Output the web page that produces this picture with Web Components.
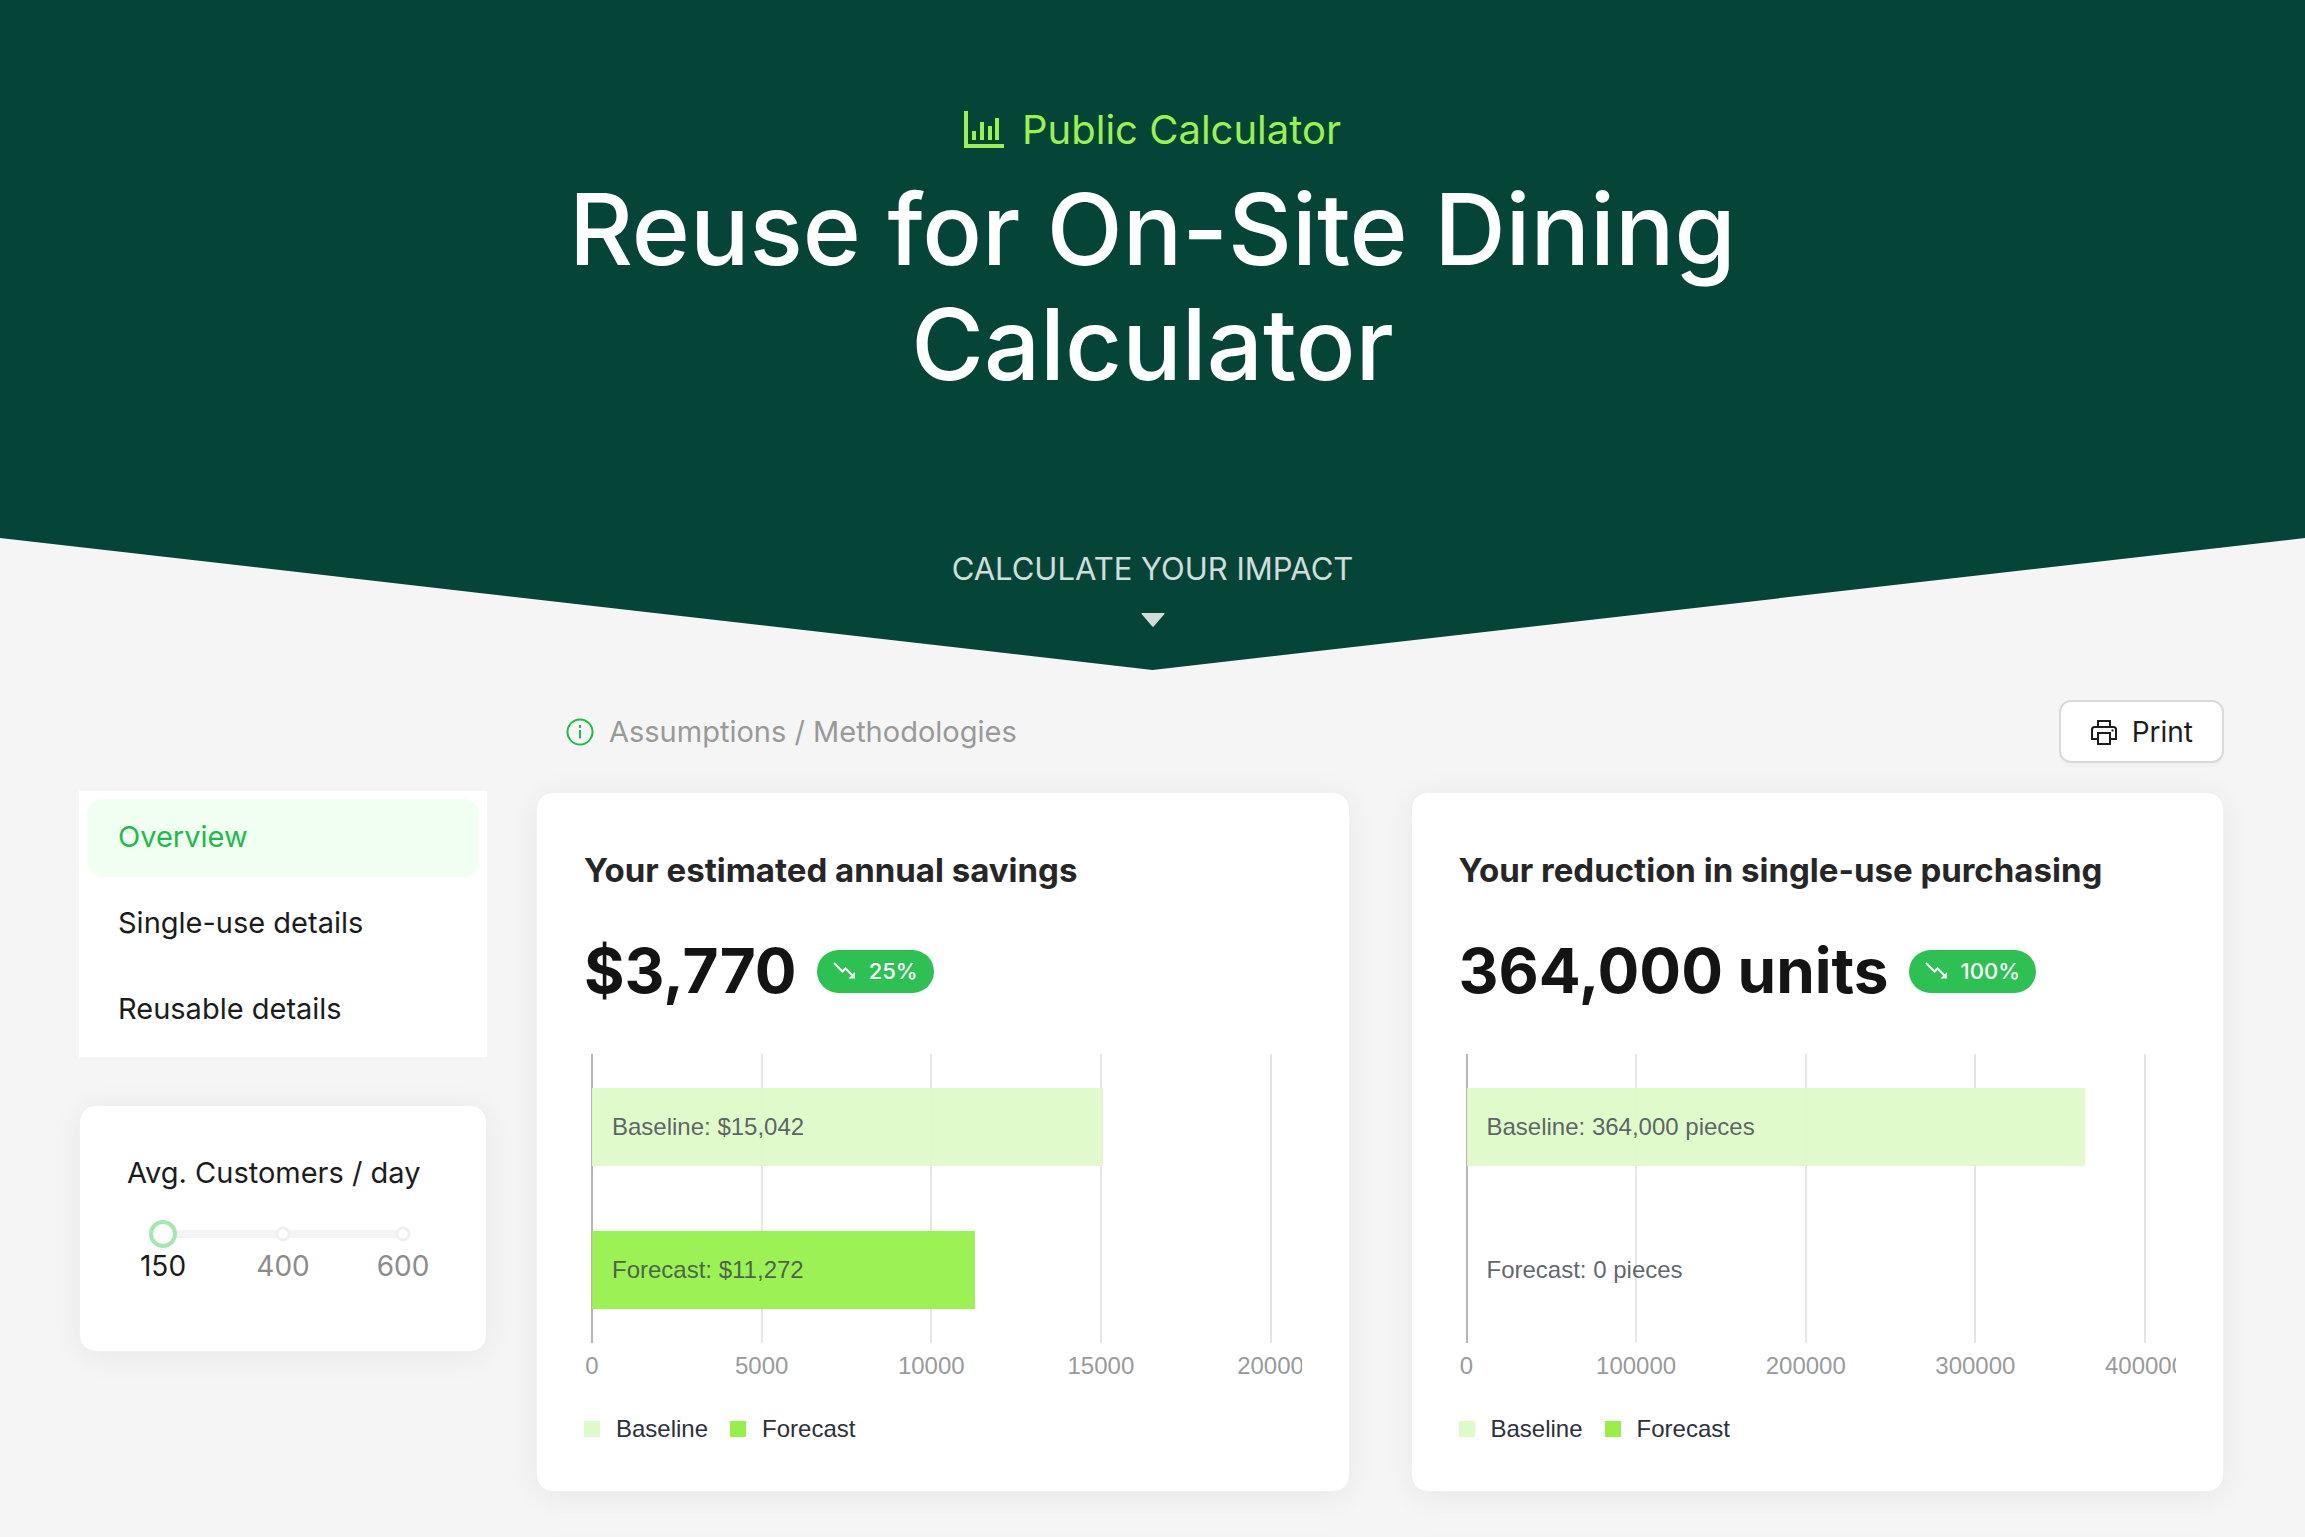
<!DOCTYPE html>
<html lang="en">
<head>
<meta charset="utf-8">
<title>Reuse for On-Site Dining Calculator</title>
<style>
    body{
        margin: 0;
        height: 100vh;
        overflow: hidden;
        background: #f5f5f5;
        color: #1c1c1c;
        font-family: Inter, "Open Sans", sans-serif;
        font-size: 29px;
    }
    .Page-body{
        display: grid;
        grid-template-columns: 408px minmax(0, 1fr);
        column-gap: 49px;
        padding: 30px 81px 0 79px;
    }
    .Page-side{
        display: flex;
        flex-direction: column;
        gap: 48px;
        padding-top: 91px;
    }
    .Page-cards{
        display: grid;
        grid-template-columns: 1fr 1fr;
        gap: 61px;
        margin-top: 29px;
    }
</style>
</head>
<body>
    <comp-hero eyebrow="Public Calculator" prompt="Calculate your impact">Reuse for On-Site Dining Calculator</comp-hero>

    <div class="Page-body">
        <div class="Page-side">
            <comp-menu>
                <comp-menu-item href="#overview" active>Overview</comp-menu-item>
                <comp-menu-item href="#single-use">Single-use details</comp-menu-item>
                <comp-menu-item href="#reusable">Reusable details</comp-menu-item>
            </comp-menu>
            <comp-card>
                <comp-slider label="Avg. Customers / day" steps="150,400,600"></comp-slider>
            </comp-card>
        </div>
        <main>
            <comp-toolbar></comp-toolbar>
            <div class="Page-cards">
                <comp-card>
                    <comp-stat heading="Your estimated annual savings" value="$3,770" change="25%"></comp-stat>
                    <comp-chart max="20000" baseline="15042" forecast="11272" prefix="$"></comp-chart>
                </comp-card>
                <comp-card>
                    <comp-stat heading="Your reduction in single-use purchasing" value="364,000 units" change="100%"></comp-stat>
                    <comp-chart max="400000" baseline="364000" forecast="0" suffix=" pieces"></comp-chart>
                </comp-card>
                <comp-card></comp-card>
                <comp-card></comp-card>
            </div>
        </main>
    </div>

<script>
/* Hero */
const templateCompHero = document.createElement("template");
templateCompHero.innerHTML = `
    <style>
        :host{
            display: block;
        }
        .Hero{
            box-sizing: border-box;
            display: flex;
            flex-direction: column;
            align-items: center;
            padding: 100px 40px 43px;
            background: #044537;
            clip-path: polygon(0 0, 100% 0, 100% 80.3%, 50% 100%, 0 80.3%);
            color: #fff;
        }
            .Hero-eyebrow{
                display: flex;
                align-items: center;
                gap: 18px;
                color: #9cf14f;
                font-size: 40px;
                line-height: 60px;
            }
            .Hero-title{
                max-width: 1300px;
                margin: 12px 0 0;
                font-size: 99px;
                font-weight: 500;
                line-height: 115px;
                text-align: center;
            }
            .Hero-prompt{
                margin-top: 143px;
                font-size: 31px;
                line-height: 48px;
                text-transform: uppercase;
                opacity: .82;
            }
            .Hero-arrow{
                margin-top: 20px;
                opacity: .82;
            }
            svg{
                display: block;
            }
    </style>

    <header class="Hero">
        <div class="Hero-eyebrow">
            <svg width="40" height="38" viewBox="0 0 40 38" fill="currentColor">
                <path d="M0 0h4v33h36v4H0z"/>
                <path d="M8 20h4v9H8zM16 11h4v18h-4zM24 15h4v14h-4zM31 7h4v22h-4z"/>
            </svg>
            <span id="eyebrow"></span>
        </div>
        <h1 class="Hero-title"><slot></slot></h1>
        <div class="Hero-prompt" id="prompt"></div>
        <svg class="Hero-arrow" width="24" height="14" viewBox="0 0 24 14" fill="#fff"><path d="M1 0h22q1 0 .4 1L12.700 13.400q-.7.7-1.400 0L.6 1Q0 0 1 0z"/></svg>
    </header>
`;

class CompHero extends HTMLElement{
    constructor(){
        super();
        this.attachShadow({mode: "open"});
        this.shadowRoot.appendChild(templateCompHero.content.cloneNode(true));
        this.shadowRoot.getElementById("eyebrow").textContent = this.getAttribute("eyebrow");
        this.shadowRoot.getElementById("prompt").textContent = this.getAttribute("prompt");
    };
};

/* Menu */
const templateCompMenu = document.createElement("template");
templateCompMenu.innerHTML = `
    <style>
        :host{
            display: block;
            background: #fff;
        }
        .Menu{
            display: flex;
            flex-direction: column;
            gap: 8px;
            padding: 8px;
        }
    </style>

    <nav class="Menu"><slot></slot></nav>
`;

class CompMenu extends HTMLElement{
    constructor(){
        super();
        this.attachShadow({mode: "open"});
        this.shadowRoot.appendChild(templateCompMenu.content.cloneNode(true));
    };
};

const templateCompMenuItem = document.createElement("template");
templateCompMenuItem.innerHTML = `
    <style>
        :host{
            display: block;
        }
        a{
            display: block;
            padding: 0 31px 2px;
            border-radius: 16px;
            color: inherit;
            line-height: 76px;
            text-decoration: none;
        }
        :host([active]) a{
            background: #f0fff2;
            color: #1fbb48;
        }
    </style>

    <a id="link"><slot></slot></a>
`;

class CompMenuItem extends HTMLElement{
    constructor(){
        super();
        this.attachShadow({mode: "open"});
        this.shadowRoot.appendChild(templateCompMenuItem.content.cloneNode(true));
        this.shadowRoot.getElementById("link").href = this.getAttribute("href");
    };
};

/* Card */
const templateCompCard = document.createElement("template");
templateCompCard.innerHTML = `
    <style>
        :host{
            display: block;
            box-sizing: border-box;
            min-width: 0;
            min-height: 247px;
            padding: 47px;
            background: #fff;
            background-clip: padding-box;
            border: 1px solid #f0f0f0;
            border-radius: 16px;
            box-shadow: 0 4px 32px rgba(0, 0, 0, .06);
        }
    </style>

    <slot></slot>
`;

class CompCard extends HTMLElement{
    constructor(){
        super();
        this.attachShadow({mode: "open"});
        this.shadowRoot.appendChild(templateCompCard.content.cloneNode(true));
    };
};

/* Slider */
const templateCompSlider = document.createElement("template");
templateCompSlider.innerHTML = `
    <style>
        :host{
            display: block;
        }
        label{
            display: block;
            line-height: 40px;
            white-space: nowrap;
        }
        .Slider{
            margin: 27px 22px 0;
        }
            input{
                -webkit-appearance: none;
                appearance: none;
                display: block;
                width: 100%;
                height: 28px;
                margin: 0;
                background:
                    radial-gradient(circle, #fff 4px, #f0f0f0 5px, #f0f0f0 7px, transparent 8px) center / 16px 16px no-repeat,
                    radial-gradient(circle, #fff 4px, #f0f0f0 5px, #f0f0f0 7px, transparent 8px) right 6px center / 16px 16px no-repeat,
                    linear-gradient(#f4f4f4, #f4f4f4) center / calc(100% - 28px) 8px no-repeat;
            }
            input::-webkit-slider-thumb{
                -webkit-appearance: none;
                box-sizing: border-box;
                width: 28px;
                height: 28px;
                background: #fff;
                border: 4px solid #a5e8af;
                border-radius: 50%;
            }
            .Slider-marks{
                display: flex;
                justify-content: space-between;
                padding: 0 14px;
                color: #8c8c8c;
                font-size: 28px;
                line-height: 36px;
            }
                .Slider-marks span{
                    display: flex;
                    justify-content: center;
                    width: 0;
                }
                .Slider-marks span:first-child{
                    color: #1c1c1c;
                }
    </style>

    <label for="range" id="label"></label>
    <div class="Slider">
        <input type="range" id="range" min="0" value="0" step="1">
        <div class="Slider-marks" id="marks"></div>
    </div>
`;

class CompSlider extends HTMLElement{
    constructor(){
        super();
        this.attachShadow({mode: "open"});
        this.shadowRoot.appendChild(templateCompSlider.content.cloneNode(true));

        const steps = this.getAttribute("steps").split(",");
        const range = this.shadowRoot.getElementById("range");
        range.max = steps.length - 1;
        range.value = 0;
        this.shadowRoot.getElementById("label").textContent = this.getAttribute("label");
        this.shadowRoot.getElementById("marks").innerHTML = steps.map(step => `<span>${step}</span>`).join("");
    };
};

/* Toolbar */
const templateCompToolbar = document.createElement("template");
templateCompToolbar.innerHTML = `
    <style>
        :host{
            display: flex;
            justify-content: space-between;
            align-items: center;
            padding-left: 30px;
        }
        a{
            display: flex;
            align-items: center;
            gap: 15px;
            color: #999;
            text-decoration: none;
        }
        button{
            display: flex;
            align-items: center;
            gap: 14px;
            box-sizing: border-box;
            height: 63px;
            padding: 0 29px;
            background: #fff;
            border: 2px solid #d9d9d9;
            border-radius: 12px;
            box-shadow: 0 4px 0 rgba(0, 0, 0, .016);
            color: #1c1c1c;
            font-family: inherit;
            font-size: 28px;
        }
    </style>

    <a href="#assumptions">
        <svg width="28" height="28" viewBox="0 0 28 28" fill="none" stroke="#1fbb48" stroke-width="2">
            <circle cx="14" cy="14" r="12.500"/>
            <path d="M14 12v8.500M14 7v3"/>
        </svg>
        Assumptions / Methodologies
    </a>
    <button type="button">
        <svg width="28" height="28" viewBox="0 0 28 28" fill="none" stroke="#1c1c1c" stroke-width="2">
            <path d="M8 9V3h12v6M8 21H2V11.500Q2 9 4.500 9h19Q26 9 26 11.500V21h-6"/>
            <path d="M8 15h12v11H8zM21.500 12.500h2"/>
        </svg>
        Print
    </button>
`;

class CompToolbar extends HTMLElement{
    constructor(){
        super();
        this.attachShadow({mode: "open"});
        this.shadowRoot.appendChild(templateCompToolbar.content.cloneNode(true));
        this.shadowRoot.querySelector("button").addEventListener("click", () => window.print());
    };
};

/* Stat */
const templateCompStat = document.createElement("template");
templateCompStat.innerHTML = `
    <style>
        :host{
            display: block;
            white-space: nowrap;
        }
        h2{
            margin: 6px 0 0;
            color: #262626;
            font-size: 33px;
            font-weight: 700;
            line-height: 48px;
        }
        .Stat-row{
            display: flex;
            align-items: center;
            gap: 20px;
            margin-top: 37px;
            line-height: 80px;
        }
            .Stat-value{
                color: #141414;
                font-size: 62px;
                font-weight: 700;
            }
            .Stat-badge{
                display: flex;
                align-items: center;
                gap: 13px;
                height: 43px;
                padding: 0 16px;
                background: #2dc153;
                border-radius: 22px;
                color: #fff;
                font-size: 22px;
                font-weight: 500;
                line-height: 43px;
            }
    </style>

    <h2 id="heading"></h2>
    <div class="Stat-row">
        <span class="Stat-value" id="value"></span>
        <span class="Stat-badge">
            <svg width="23" height="18" viewBox="0 0 23 18" fill="none" stroke="#fff" stroke-width="2">
                <path d="M1 1l8.500 8.500 3-3L20 14"/>
                <path d="M22 10v6.500h-6.500z" fill="#fff" stroke="none"/>
            </svg>
            <span id="change"></span>
        </span>
    </div>
`;

class CompStat extends HTMLElement{
    constructor(){
        super();
        this.attachShadow({mode: "open"});
        this.shadowRoot.appendChild(templateCompStat.content.cloneNode(true));
        for(const name of ["heading", "value", "change"]){
            this.shadowRoot.getElementById(name).textContent = this.getAttribute(name);
        }
    };
};

/* Chart */
const templateCompChart = document.createElement("template");
templateCompChart.innerHTML = `
    <style>
        :host{
            display: block;
            margin-top: 43px;
            font-family: "Liberation Sans", Arial, sans-serif;
            font-size: 24px;
        }
        .Chart{
            overflow: hidden;
            padding: 0 30px 0 7px;
        }
            .Chart-plot{
                display: grid;
            }
                .Chart-grid, .Chart-bars{
                    grid-area: 1 / 1;
                }
                .Chart-grid{
                    display: grid;
                    grid-template-columns: repeat(4, 1fr);
                    border-right: 2px solid #e6e6e6;
                }
                    .Chart-grid i{
                        border-left: 2px solid #e6e6e6;
                    }
                    .Chart-grid i:first-child{
                        border-color: #b6b6b6;
                    }
                .Chart-bars{
                    display: flex;
                    flex-direction: column;
                    gap: 65px;
                    padding: 34px 0;
                    margin-left: 1px;
                    color: rgba(55, 61, 71, .8);
                    line-height: 78px;
                    white-space: nowrap;
                }
                    .Chart-bar{
                        height: 78px;
                        text-indent: 20px;
                    }
                    #baseline{
                        background: rgba(223, 250, 201, .95);
                    }
                    #forecast{
                        background: rgba(151, 240, 76, .95);
                    }
            .Chart-ticks{
                display: flex;
                justify-content: space-between;
                padding: 9px 1px 0;
                color: #999a9d;
                line-height: 28px;
            }
                .Chart-ticks span{
                    display: flex;
                    justify-content: center;
                    width: 0;
                }
        .Chart-legend{
            display: flex;
            gap: 22px;
            margin-top: 34px;
            color: #2c313b;
            line-height: 30px;
        }
            .Chart-legend span{
                display: flex;
                align-items: center;
                gap: 16px;
            }
            .Chart-legend span::before{
                content: "";
                width: 16px;
                height: 16px;
                background: #dffac9;
            }
            .Chart-legend span + span::before{
                background: #97ef48;
            }
    </style>

    <div class="Chart">
        <div class="Chart-plot">
            <div class="Chart-grid"><i></i><i></i><i></i><i></i></div>
            <div class="Chart-bars">
                <div class="Chart-bar" id="baseline"></div>
                <div class="Chart-bar" id="forecast"></div>
            </div>
        </div>
        <div class="Chart-ticks" id="ticks"></div>
    </div>
    <div class="Chart-legend"><span>Baseline</span><span>Forecast</span></div>
`;

class CompChart extends HTMLElement{
    constructor(){
        super();
        this.attachShadow({mode: "open"});
        this.shadowRoot.appendChild(templateCompChart.content.cloneNode(true));

        const max = Number(this.getAttribute("max"));
        const prefix = this.getAttribute("prefix") || "";
        const suffix = this.getAttribute("suffix") || "";

        /* Bars */
        for(const [id, name] of [["baseline", "Baseline"], ["forecast", "Forecast"]]){
            const value = Number(this.getAttribute(id));
            const bar = this.shadowRoot.getElementById(id);
            bar.style.width = (value / max * 100) + "%";
            bar.textContent = name + ": " + prefix + value.toLocaleString("en-US") + suffix;
        }

        /* Ticks */
        this.shadowRoot.getElementById("ticks").innerHTML = [0, 1, 2, 3, 4].map(n => `<span>${max / 4 * n}</span>`).join("");
    };
};

window.customElements.define("comp-hero", CompHero);
window.customElements.define("comp-menu", CompMenu);
window.customElements.define("comp-menu-item", CompMenuItem);
window.customElements.define("comp-card", CompCard);
window.customElements.define("comp-slider", CompSlider);
window.customElements.define("comp-toolbar", CompToolbar);
window.customElements.define("comp-stat", CompStat);
window.customElements.define("comp-chart", CompChart);
</script>
</body>
</html>
